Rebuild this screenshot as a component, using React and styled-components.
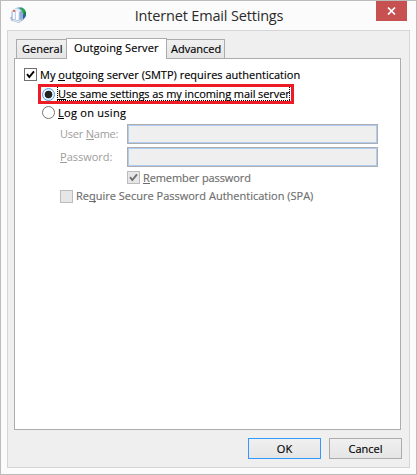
import React from 'react';
import styled, { createGlobalStyle } from 'styled-components';

const GlobalStyle = createGlobalStyle`
  *, *::before, *::after { box-sizing: border-box; }
  body {
    margin: 0;
    font: 11px/15px "Open Sans", "Noto Sans", sans-serif;
    color: #000;
    overflow: hidden;
  }
`;

const Window = styled.div`
  width: 417px;
  height: 475px;
  border: 1px solid #bcbcbc;
  background: #fbfbfb;
  padding: 0 6px;
  display: flex;
  flex-direction: column;
`;

const TitleBar = styled.header`
  height: 29px;
  flex: none;
  display: grid;
  grid-template-columns: 34px 1fr 34px;
  align-items: start;
`;

const AppIcon = styled.svg`
  width: 18px;
  height: 18px;
  margin: 5px 0 0 2px;
`;

const Title = styled.h1`
  margin: 5px 0 0;
  padding-left: 1px;
  text-align: center;
  font-size: 14.5px;
  font-weight: 400;
  line-height: 19px;
  letter-spacing: -0.17px;
  color: #2b2b2b;
`;

const CloseButton = styled.button`
  width: 31px;
  height: 20px;
  margin: 0;
  padding: 0;
  border: 0;
  background: #c75050;
  display: grid;
  place-items: center;
`;

const Panel = styled.main`
  width: 403px;
  height: 438px;
  border: 1px solid #d5d5d5;
  background: #efefef;
  padding: 7px 7px 8px 6px;
  display: flex;
  flex-direction: column;
`;

const TabList = styled.div`
  height: 21px;
  margin-bottom: -1px;
  padding-left: 2px;
  display: flex;
  align-items: flex-end;
  z-index: 1;
`;

const Tab = styled.div`
  width: ${p => p.$width}px;
  height: ${p => (p.$active ? 21 : 19)}px;
  margin: ${p => (p.$active ? '0 -1px' : '0 0 1px')};
  padding: 1px 0 0 ${p => p.$inset}px;
  border: 1px solid #acacac;
  border-bottom: 0;
  background: ${p => (p.$active ? '#fff' : 'linear-gradient(#f0f0f0, #e5e5e5)')};
  z-index: ${p => (p.$active ? 1 : 0)};
  white-space: nowrap;
`;

const Page = styled.section`
  width: 387px;
  height: 372px;
  border: 1px solid #acacac;
  background: #fff;
  padding: 8px 0 0 9px;
`;

const Label = styled.span`
  letter-spacing: ${p => p.$track || 0}px;
  margin-top: ${p => -(p.$raise || 0)}px;
  white-space: nowrap;
  -webkit-text-stroke: 0.15px currentColor;
  u {
    text-decoration: none;
    box-shadow: inset 0 -1px currentColor;
    display: inline-block;
    height: 14px;
    line-height: 15px;
  }
`;

const OptionRow = styled.div`
  height: 15px;
  margin: ${p => p.$top || 0}px 0 0 ${p => p.$indent || 0}px;
  display: flex;
  align-items: center;
  gap: ${p => p.$gap || 3}px;
  color: ${p => (p.$disabled ? '#6d6d6d' : '#000')};
`;

const CheckBox = styled.span`
  width: 13px;
  height: 13px;
  flex: none;
  border: 1px solid ${p => (p.$disabled ? '#bcbcbc' : '#707070')};
  background: ${p => (p.$disabled ? '#e6e6e6' : '#fff')};
  color: ${p => (p.$disabled ? '#707070' : '#000')};
  display: grid;
  place-items: center;
  svg { display: block; }
`;

const Radio = styled.span`
  width: 13px;
  height: 13px;
  flex: none;
  border: 1px solid ${p => (p.$selected ? '#4a9ff0' : '#757575')};
  border-radius: 50%;
  background: ${p => (p.$selected ? 'radial-gradient(circle, #222 3.5px, #eaf4ff 4.2px)' : '#fff')};
`;

const Highlight = styled.div`
  width: 256px;
  height: 20px;
  margin: 2px 0 0 14px;
  border: 3px solid #ed1c24;
  padding-left: 1px;
  display: flex;
  align-items: center;
  gap: 2px;
`;

const FocusRect = styled.span`
  height: 14px;
  width: 233px;
  padding-left: 1px;
  display: block;
  line-height: 13px;
  background:
    repeating-linear-gradient(90deg, #000 0 1px, transparent 1px 2px) left bottom / 100% 1px no-repeat,
    repeating-linear-gradient(#000 0 1px, transparent 1px 2px) left top / 1px 100% no-repeat,
    repeating-linear-gradient(#000 0 1px, transparent 1px 2px) right top / 1px 100% no-repeat;
  u { height: 13px; line-height: 13px; }
`;

const FieldRow = styled.div`
  height: 20px;
  margin: ${p => p.$top}px 0 0 36px;
  display: grid;
  grid-template-columns: 67px 251px;
  align-items: start;
  color: #9d9d9d;
  ${Label} { padding-top: 2px; -webkit-text-stroke-width: 0; }
`;

const Field = styled.div`
  height: 20px;
  border: 1px solid #abadb3;
  box-shadow: inset 0 0 0 1px #b0cdee;
  background: #efefef;
`;

const Footer = styled.footer`
  margin-top: 8px;
  display: flex;
  justify-content: flex-end;
  gap: 8px;
`;

const Button = styled.button`
  width: 73px;
  height: 21px;
  margin: 0;
  padding: 0 0 1px;
  border: 1px solid ${p => (p.$primary ? '#3399ff' : '#acacac')};
  background: linear-gradient(#f0f0f0, #e5e5e5);
  color: #000;
  font: inherit;
`;

const CheckMark = () => (
  <svg width="11" height="11" viewBox="0 0 11 11" fill="none">
    <path d="M2 5.2 4.3 8 9 2.3" stroke="currentColor" strokeWidth="1.9" />
  </svg>
);

const MailSetupIcon = () => (
  <AppIcon viewBox="0 0 18 18">
    <circle cx="10.5" cy="7.8" r="6.6" fill="#6f9fd2" />
    <path d="M11.5 1.2c2.6.2 4.8 2 5.5 4.8L15 8l-2-2.5-2-1Z" fill="#2fa45c" />
    <path d="m14 8.6 3-1.2c.1 2.8-1 4.6-3 6Z" fill="#2c5fa6" />
    <path d="M14.6 5.2 17 6.4l-.2 2.6-2 .6Z" fill="#17803f" />
    <path d="M2.4 5.5C3.6 3.4 6 2 8.4 2.2l4.6 2.6.6 8-4 3.4-7.4-2.4Z" fill="#b9cfea" />
    <path d="M3.4 4.7C5 3 7 2.2 9 2.6l3 1.7-2 1.6Z" fill="#e2edf8" />
    <path d="m10.6 6 2.4-1.5.6 8.2-3 2.3Z" fill="#8fadd6" />
    <path d="M4 6h1.8v7.2H4ZM7 5.2h2.6V14H7Z" fill="#fff" />
    <path d="m1 11.4 1.6-.8 1 2.4 5.6 1.8 4.6-2.6 1.2 1.2-5 3.6-7.6-2.2Z" fill="#a9b9d2" />
    <path d="m4 13.6 5.4 1.4 2.4-1.2.2 1.2-2.4 1.4L4 14.8Z" fill="#dde6f1" />
    <path d="M4.2 3.9h2v2h-2Z" fill="#ea6247" />
  </AppIcon>
);

export default function App() {
  return (
    <>
      <GlobalStyle />
      <Window>
        <TitleBar>
          <MailSetupIcon />
          <Title>Internet Email Settings</Title>
          <CloseButton aria-label="Close">
            <svg width="9" height="8" viewBox="0 0 9 8">
              <path d="m1 .5 7 7M8 .5l-7 7" stroke="#fff" strokeWidth="1.7" />
            </svg>
          </CloseButton>
        </TitleBar>
        <Panel>
          <TabList>
            <Tab $width={51} $inset={5}><Label>General</Label></Tab>
            <Tab $width={101} $inset={7} $active><Label $track={0.1}>Outgoing Server</Label></Tab>
            <Tab $width={59} $inset={4}><Label>Advanced</Label></Tab>
          </TabList>
          <Page>
            <OptionRow>
              <CheckBox><CheckMark /></CheckBox>
              <Label $track={0.01}>My <u>o</u>utgoing server (SMTP) requires authentication</Label>
            </OptionRow>
            <Highlight>
              <Radio $selected />
              <FocusRect><Label $track={-0.08}><u>U</u>se same settings as my incoming mail server</Label></FocusRect>
            </Highlight>
            <OptionRow $top={1} $indent={18}>
              <Radio />
              <Label $track={0.27}><u>L</u>og on using</Label>
            </OptionRow>
            <FieldRow $top={4}>
              <Label $track={-0.22}>User <u>N</u>ame:</Label>
              <Field />
            </FieldRow>
            <FieldRow $top={3}>
              <Label><u>P</u>assword:</Label>
              <Field />
            </FieldRow>
            <OptionRow $top={3} $indent={103} $disabled>
              <CheckBox $disabled><CheckMark /></CheckBox>
              <Label $track={-0.1}><u>R</u>emember password</Label>
            </OptionRow>
            <OptionRow $top={4} $indent={36} $disabled>
              <CheckBox $disabled />
              <Label $track={0} $raise={2}>Re<u>q</u>uire Secure Password Authentication (SPA)</Label>
            </OptionRow>
          </Page>
          <Footer>
            <Button $primary><Label>OK</Label></Button>
            <Button><Label>Cancel</Label></Button>
          </Footer>
        </Panel>
      </Window>
    </>
  );
}
